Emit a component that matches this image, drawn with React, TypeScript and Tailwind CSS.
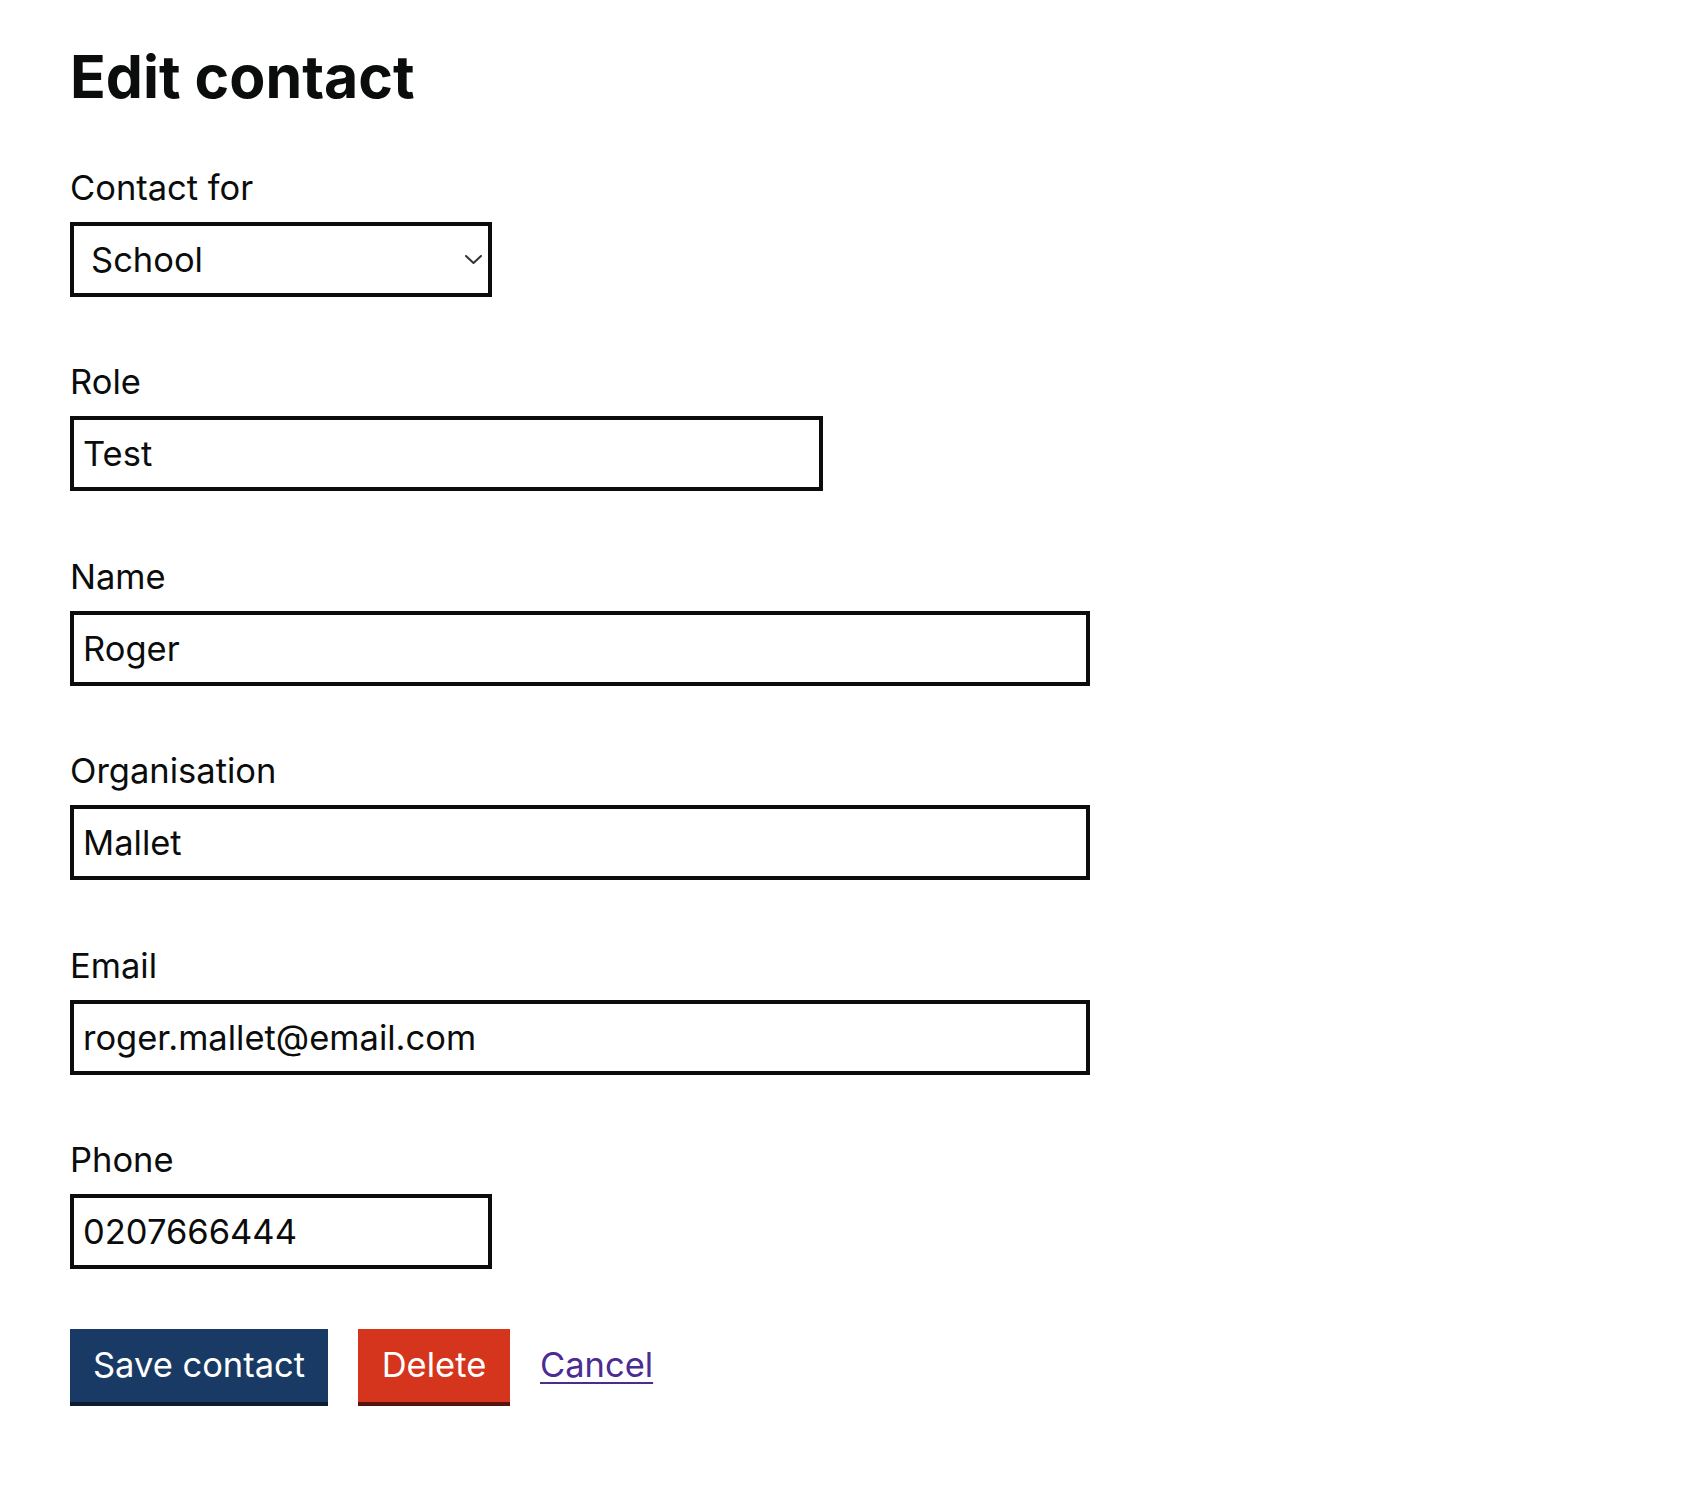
import React from "react";

const fields = [
  { label: "Role", value: "Test", width: "w-[753px]" },
  { label: "Name", value: "Roger", width: "w-[1020px]" },
  { label: "Organisation", value: "Mallet", width: "w-[1020px]" },
  { label: "Email", value: "roger.mallet@email.com", width: "w-[1020px]" },
  { label: "Phone", value: "0207666444", width: "w-[422px]" },
];

export default function App() {
  return (
    <div className="min-h-[1510px] bg-white pl-[70px] pt-[45px] font-['Inter',sans-serif] text-[#0b0c0c]">
      <h1 className="text-[59px] font-bold leading-[64px]">Edit contact</h1>
      <form className="mt-[59px] flex flex-col gap-[65.4px]" onSubmit={(e) => e.preventDefault()}>
        <div className="flex flex-col">
          <label className="text-[34.5px] leading-[40px]">Contact for</label>
          <div className="mt-[14px] flex h-[75px] w-[422px] items-center border-[4px] border-[#0b0c0c] bg-white pr-[6px]">
            <select
              defaultValue="School"
              className="h-full flex-1 appearance-none bg-transparent pl-[17px] text-[34.5px] leading-[40px] text-[#0b0c0c] outline-none"
            >
              <option>School</option>
              <option>Trust</option>
              <option>Local authority</option>
            </select>
            <svg width="17" height="9" viewBox="0 0 17 9" fill="none" className="shrink-0">
              <path d="M1 1L8.5 8L16 1" stroke="#333" strokeWidth="2" strokeLinecap="round" strokeLinejoin="round" />
            </svg>
          </div>
        </div>
        {fields.map((f) => (
          <div key={f.label} className="flex flex-col">
            <label className="text-[34.5px] leading-[40px]">{f.label}</label>
            <input
              defaultValue={f.value}
              className={`mt-[14px] h-[75px] ${f.width} border-[4px] border-[#0b0c0c] bg-white pl-[9px] text-[34.5px] leading-[40px] text-[#0b0c0c] outline-none`}
            />
          </div>
        ))}
      </form>
      <div className="mt-[60px] flex h-[73px] items-center gap-[30px]">
        <button className="flex h-[73px] w-[258px] items-center justify-center bg-[#183a65] text-[34.5px] leading-[40px] text-white shadow-[0_4px_0_#0b1d33]">
          Save contact
        </button>
        <button className="flex h-[73px] w-[152px] items-center justify-center bg-[#d4351c] text-[34.5px] leading-[40px] text-white shadow-[0_4px_0_#55150b]">
          Delete
        </button>
        <a href="#" className="text-[34.5px] leading-[40px] text-[#4c2c92] underline decoration-2 underline-offset-[5px]">
          Cancel
        </a>
      </div>
    </div>
  );
}
